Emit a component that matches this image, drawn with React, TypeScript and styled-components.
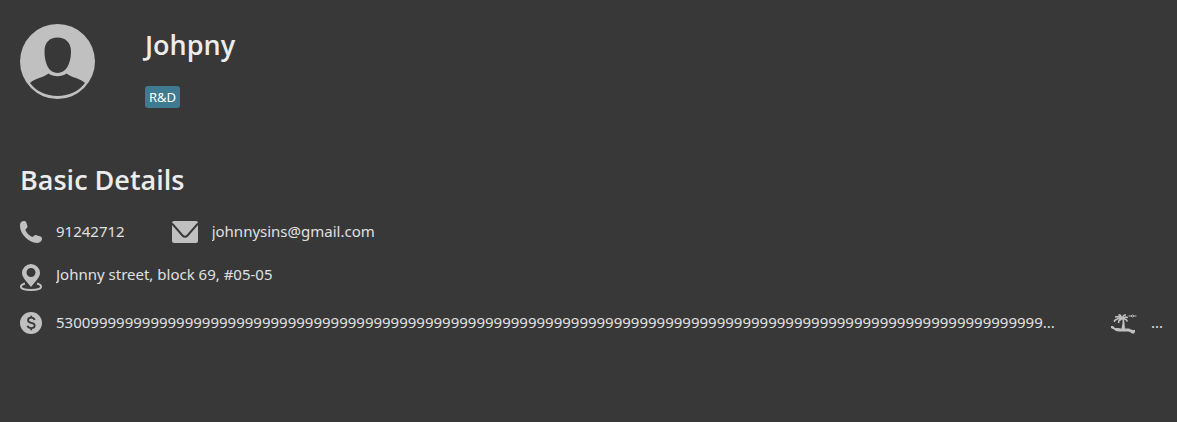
import React from "react";
import styled, { createGlobalStyle } from "styled-components";

const GlobalStyle = createGlobalStyle`
  * { box-sizing: border-box; }
  body {
    margin: 0;
    background: #383838;
    color: #e0e0e0;
    font-family: "Noto Sans", "Open Sans", sans-serif;
    font-size: 15px;
    line-height: 20px;
  }
`;

const Panel = styled.main`
  display: flex;
  flex-direction: column;
  padding: 24px 14px 24px 20px;
`;

const Profile = styled.header`
  display: flex;
  align-items: flex-start;
  gap: 50px;
`;

const Identity = styled.div`
  display: flex;
  flex-direction: column;
  align-items: flex-start;
  gap: 21px;
`;

const Heading = styled.h1`
  margin: 0;
  padding-top: 1px;
  color: #ececec;
  font-family: "Open Sans", "Noto Sans", sans-serif;
  font-size: 27px;
  font-weight: 600;
  line-height: 40px;
`;

const Tag = styled.span`
  padding: 1px 4px;
  border-radius: 3px;
  background: #3e7b91;
  color: #ffffff;
  font-size: 13px;
`;

const Details = styled.section`
  display: flex;
  flex-direction: column;
  padding-top: 51px;
`;

const DetailRows = styled.div`
  display: flex;
  flex-direction: column;
  gap: 21px;
  padding-top: 21px;
`;

const Row = styled.div<{ $gap?: number }>`
  display: flex;
  gap: ${(p) => p.$gap ?? 0}px;
`;

const Detail = styled.div<{ $grow?: boolean }>`
  display: flex;
  align-items: flex-start;
  gap: 14px;
  min-width: 0;
  flex: ${(p) => (p.$grow ? "1 1 0" : "none")};
`;

const Value = styled.span`
  overflow: hidden;
  text-overflow: ellipsis;
  white-space: nowrap;
`;

const Icon = styled.svg`
  display: block;
  flex: none;
  fill: #c0c0c0;
`;

const salary = "5300" + "9".repeat(111) + "...";

export default function App() {
  return (
    <>
      <GlobalStyle />
      <Panel>
        <Profile>
          <Icon width="75" height="75" viewBox="0 0 75 75" role="img" aria-label="Avatar">
            <path
              fillRule="evenodd"
              d="M37.5 0a37.5 37.5 0 1 1 0 75a37.5 37.5 0 0 1 0-75zM37.5 13.5c-8 0-13 5-13 14c0 13 5 21.500 13 21.500s13.500-8.500 13.500-21.500c0-9-5.500-14-13.500-14zM28.500 49.500c-6 5-13 4-18.500 9.500c6 8 16 13 27.500 13s21.500-5 27.500-13c-5.500-5.500-12.500-4.500-18.500-9.500c-5 3.500-13 3.500-18 0z"
            />
          </Icon>
          <Identity>
            <Heading>Johpny</Heading>
            <Tag>R&amp;D</Tag>
          </Identity>
        </Profile>
        <Details>
          <Heading as="h2">Basic Details</Heading>
          <DetailRows>
            <Row $gap={47}>
              <Detail>
                <Icon width="22" height="22" viewBox="0 0 22 22" aria-hidden="true">
                  <path d="M1.500 .8C3-.2 5.500-.2 6.300 1.500L7.300 4.500c.4 1.300 0 2.300-1 3L5.700 8.200c-.3.5-.3 1 0 1.500c1.300 2.500 3.300 4.600 6 6c.7.3 1.200.2 1.600-.2l.9-.9c.7-.6 1.500-.7 2.300-.4l4 1.400c1.300.5 1.700 1.700 1.400 2.900c-.6 2.300-2.400 3.500-5 3.500C8.500 21.500 0 13 0 5C0 3 .3 1.700 1.500 .8z" />
                </Icon>
                <Value>91242712</Value>
              </Detail>
              <Detail>
                <Icon width="26" height="22" viewBox="0 0 26 22" aria-hidden="true">
                  <rect width="26" height="22" rx="2" />
                  <path d="M0 2.500L10.500 14.500c1.500 1.700 3.500 1.700 5 0L26 2.500" fill="none" stroke="#383838" strokeWidth="1.900" />
                </Icon>
                <Value>johnnysins@gmail.com</Value>
              </Detail>
            </Row>
            <Row>
              <Detail>
                <Icon width="22" height="27" viewBox="0 0 22 27" aria-hidden="true">
                  <path fillRule="evenodd" d="M11 0a9 9 0 0 1 9 9c0 4-4 8-9 14C6 17 2 13 2 9a9 9 0 0 1 9-9zM11 4a4.500 4.500 0 1 0 0 9a4.500 4.500 0 0 0 0-9z" />
                  <path d="M5 19.500C2.500 20.200.9 21.200.9 22.600C.9 25 5.500 26 11 26s10.100-1 10.100-3.400c0-1.400-1.600-2.400-4.100-3.100" fill="none" stroke="#c0c0c0" strokeWidth="1.900" />
                </Icon>
                <Value>Johnny street, block 69, #05-05</Value>
              </Detail>
            </Row>
            <Row $gap={36}>
              <Detail $grow>
                <Icon width="22" height="22" viewBox="0 0 22 22" aria-hidden="true">
                  <circle cx="11" cy="11" r="11" />
                  <path d="M14.600 8C14.200 6.500 13 5.700 11.200 5.700C9.300 5.700 8 6.700 8 8.200c0 3.700 6.700 1.600 6.700 5.300c0 1.600-1.400 2.700-3.500 2.700c-2 0-3.300-.9-3.700-2.400M11.200 3.800v2M11.200 16v2.200" fill="none" stroke="#383838" strokeWidth="1.800" />
                </Icon>
                <Value>{salary}</Value>
              </Detail>
              <Detail>
                <Icon width="26" height="22" viewBox="0 -2 26 22" aria-hidden="true">
                  <path d="M0 12h2l2 2h3l3 .5h8l2 1l2 .5h2v2l-1 1.500h-2l-2-1.500l-2-.5H8l-3-.5l-2-1.500l-3-1.500z M11.500 5h1.500l.5 4l.5 6h-3.500l.5-3l.5-3z" />
                  <path d="M11.500 4.500L8 2.500L4 3M11.500 4.500L7 4.500L3.500 6.500V8M11.500 4.500L8 6.500L7.500 9M11.500 4.500L12.500 1.500L15 .8M11 4L9 1L7.500 .8M12 4.500L14.500 3L17 3.500M12 4.500L15 5.500L16.500 7.500" fill="none" stroke="#c0c0c0" strokeWidth="1.500" />
                  <path d="M17.500 2h2.500l1.500-1l1.500 1h2.500M20 2l1.500 1l1.500-1" fill="none" stroke="#c0c0c0" />
                </Icon>
                <Value>...</Value>
              </Detail>
            </Row>
          </DetailRows>
        </Details>
      </Panel>
    </>
  );
}
